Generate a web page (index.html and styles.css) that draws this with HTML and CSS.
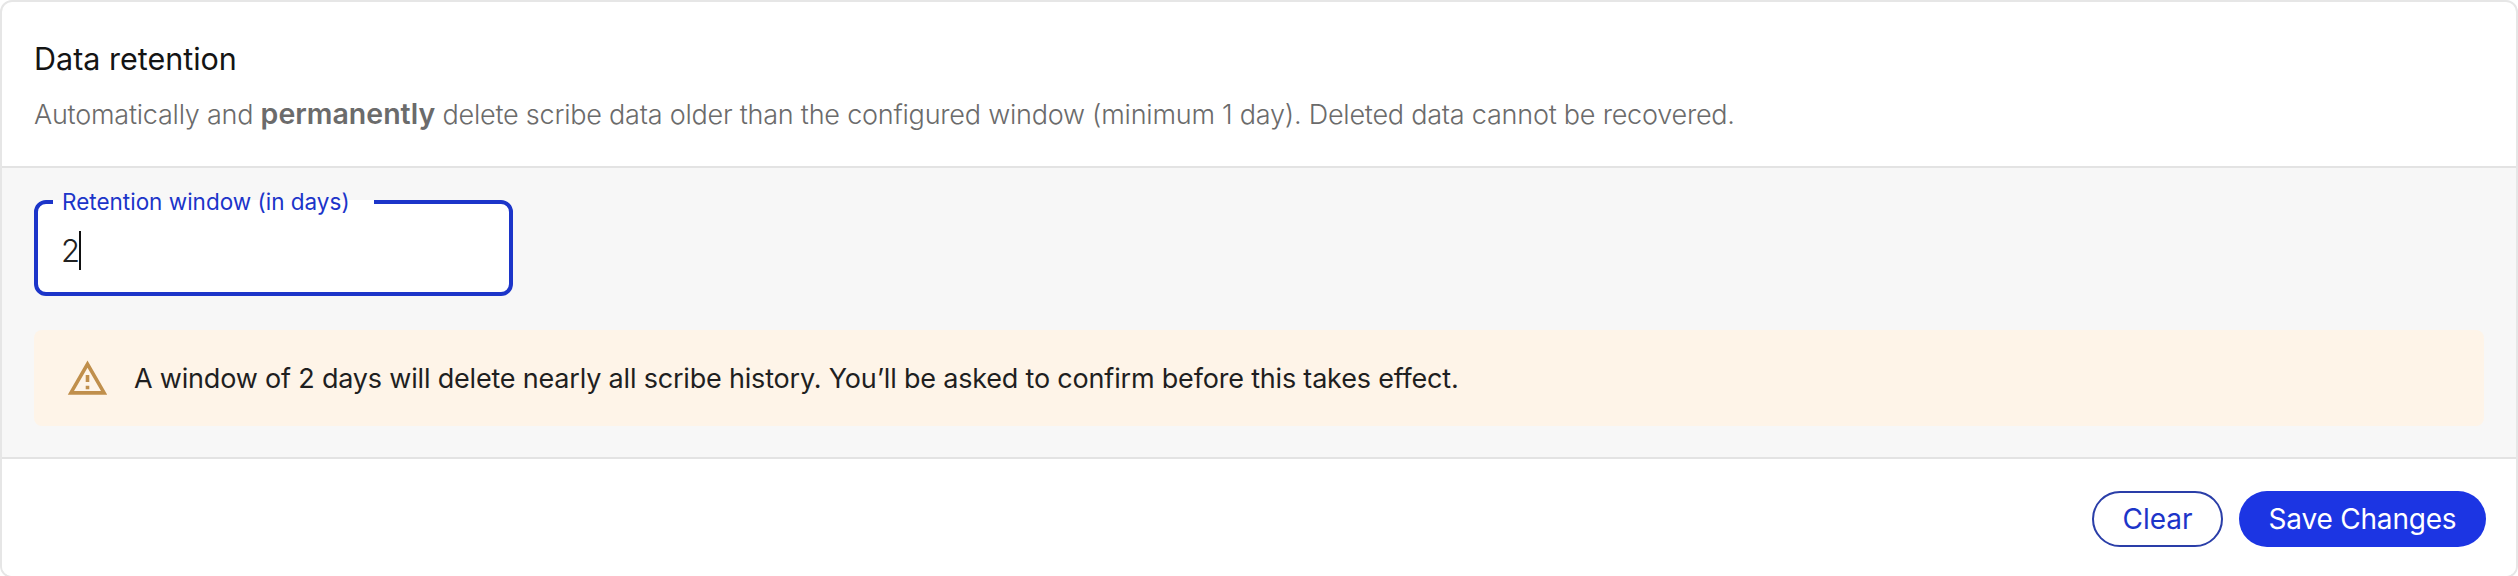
FILE: index.html
```html
<!DOCTYPE html>
<html lang="en">
<head>
<meta charset="UTF-8">
<meta name="viewport" content="width=device-width, initial-scale=1.0">
<title>Data retention</title>
<link rel="stylesheet" href="styles.css">
</head>
<body>
<div class="card">
    <div class="head">
        <h2 class="title">Data retention</h2>
        <p class="desc">Automatically and <strong>permanently</strong> delete scribe data older than the configured window (minimum 1 day). Deleted data cannot be recovered.</p>
    </div>
    <div class="main">
        <fieldset class="field">
            <legend class="field-label">Retention window (in days)</legend>
            <div class="field-value">2<span class="caret"></span></div>
        </fieldset>
        <div class="alert">
            <svg class="alert-icon" viewBox="0 0 24 24"><path d="M12 5.99L19.53 19H4.47L12 5.99M12 2L1 21h22L12 2zm1 14h-2v2h2v-2zm0-6h-2v4h2v-4z"/></svg>
            <span>A window of 2 days will delete nearly all scribe history. You’ll be asked to confirm before this takes effect.</span>
        </div>
    </div>
    <div class="foot">
        <button class="btn btn-clear">Clear</button>
        <button class="btn btn-save">Save Changes</button>
    </div>
</div>
</body>
</html>
```

FILE: styles.css
```css
html,
body {
    margin: 0;
    height: 576px;
    overflow: hidden;
    background: #fff;
}
h2,
p {
    margin: 0;
}
.card {
    box-sizing: border-box;
    height: 578px;
    border: 2px solid #e6e6e6;
    border-radius: 12px;
    overflow: hidden;
    display: flex;
    flex-direction: column;
    font-family: "Inter", "Liberation Sans", sans-serif;
}
.head {
    box-sizing: border-box;
    height: 166px;
    padding: 37px 32px 0;
    border-bottom: 2px solid #e3e3e3;
}
.title {
    font-size: 30.5px;
    line-height: 40px;
    font-weight: 400;
    color: #141414;
}
.desc {
    margin-top: 17px;
    font-size: 27px;
    letter-spacing: -0.23px;
    line-height: 36px;
    font-weight: 300;
    color: #6b6b6b;
}
.desc strong {
    font-size: 28.5px;
    letter-spacing: 0;
    font-weight: 600;
}
.main {
    box-sizing: border-box;
    height: 291px;
    padding: 20px 32px 0;
    background: #f7f7f7;
    border-bottom: 2px solid #e3e3e3;
}
.field {
    box-sizing: border-box;
    width: 479px;
    height: 108px;
    margin: 0;
    padding: 0 0 0 23px;
    border: 4px solid #1c35c9;
    border-radius: 12px;
    background: #fff;
}
.field-label {
    padding: 0 24px 0 9px;
    margin-left: -8px;
    font-size: 22.5px;
    line-height: 28px;
    color: #1c35c9;
}
.field-value {
    display: flex;
    align-items: center;
    height: 68px;
    font-size: 31px;
    font-weight: 300;
    letter-spacing: -1px;
    color: #222;
}
.caret {
    width: 2px;
    height: 39px;
    background: #111;
}
.alert {
    box-sizing: border-box;
    height: 96px;
    margin-top: 34px;
    padding: 0 32px;
    display: flex;
    align-items: center;
    gap: 25px;
    background: #fef4e8;
    border-radius: 8px;
    font-size: 27px;
    letter-spacing: -0.19px;
    color: #1f1f1f;
}
.alert-icon {
    width: 43px;
    height: 43px;
    fill: #c08f4c;
    flex: none;
}
.foot {
    flex: 1;
    display: flex;
    justify-content: flex-end;
    align-items: flex-start;
    gap: 16px;
    padding: 32px 30px 0 0;
    background: #fff;
}
.btn {
    box-sizing: border-box;
    height: 56px;
    border-radius: 28px;
    font-family: "Inter", "Liberation Sans", sans-serif;
    font-size: 28px;
    padding: 0;
}
.btn-clear {
    width: 131px;
    border: 2px solid #2a3ea8;
    background: #fff;
    color: #1c35c9;
}
.btn-save {
    width: 247px;
    border: 0;
    letter-spacing: -0.2px;
    background: #1c35e3;
    color: #fff;
}
```
